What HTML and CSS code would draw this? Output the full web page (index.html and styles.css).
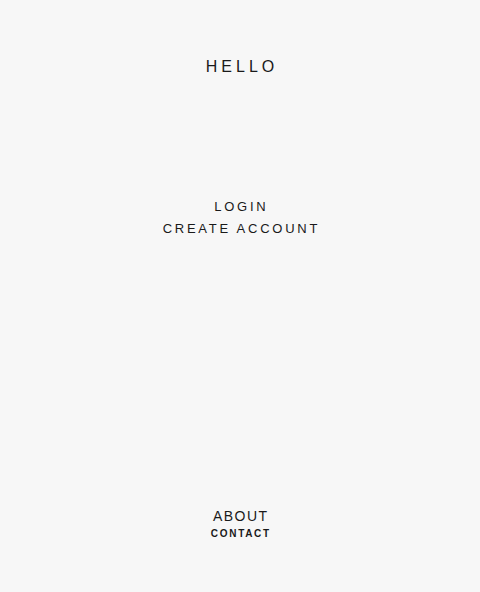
FILE: index.html
```html
<!DOCTYPE html>
<html>
<head>
<meta charset="utf-8">
<link rel="stylesheet" href="styles.css">
</head>
<body>
<div class="page">
  <h1 class="title">HELLO</h1>
  <nav class="auth">
    <a class="auth-link">LOGIN</a>
    <a class="auth-link">CREATE ACCOUNT</a>
  </nav>
  <footer class="foot">
    <a class="about">ABOUT</a>
    <a class="contact">CONTACT</a>
  </footer>
</div>
</body>
</html>
```
FILE: styles.css
```css
html, body {
  margin: 0;
  padding: 0;
  background: #f7f7f7;
}
body {
  font-family: "Liberation Sans", Arial, sans-serif;
  color: #1a1a1a;
}
.page {
  width: 480px;
  height: 592px;
  display: flex;
  flex-direction: column;
  align-items: center;
}
.title {
  margin: 58px 0 0 0;
  font-size: 16px;
  font-weight: normal;
  letter-spacing: 4px;
  line-height: 18px;
  padding-left: 4px;
}
.auth {
  margin-top: 123px;
  display: flex;
  flex-direction: column;
  align-items: center;
  gap: 6px;
}
.auth-link {
  font-size: 13px;
  letter-spacing: 2.75px;
  line-height: 16px;
  padding-left: 2.75px;
}
.foot {
  margin-top: auto;
  margin-bottom: 52px;
  display: flex;
  flex-direction: column;
  align-items: center;
  gap: 4px;
}
.about {
  font-size: 14px;
  letter-spacing: 1.5px;
  line-height: 16px;
  padding-left: 1.5px;
}
.contact {
  font-size: 10px;
  font-weight: bold;
  letter-spacing: 1.7px;
  line-height: 12px;
  padding-left: 1.7px;
}
```
